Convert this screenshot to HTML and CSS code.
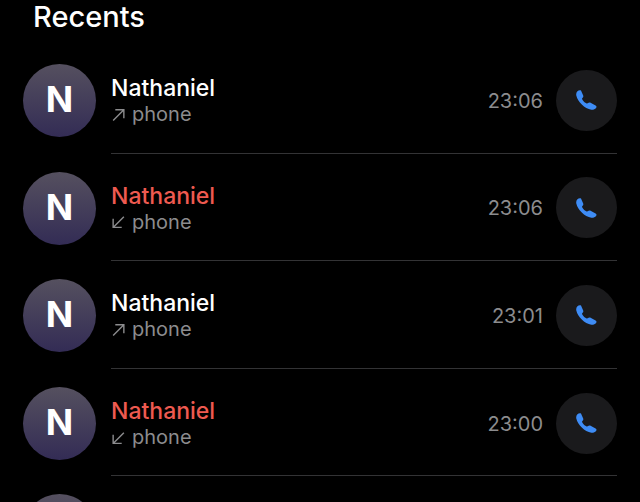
FILE: index.html
```html
<!DOCTYPE html>
<html lang="en">
<head>
  <meta charset="UTF-8">
  <meta name="viewport" content="width=device-width, initial-scale=1.0">
  <title>Recents</title>
  <link rel="stylesheet" href="styles.css">
</head>
<body>
  <h1 class="title">Recents</h1>

  <div class="call-list">
    <div class="call-row">
      <div class="avatar">N</div>
      <div class="call-main">
        <div class="call-info">
          <div class="call-name">Nathaniel</div>
          <div class="call-type">
            <svg class="arrow" viewBox="0 0 14 14"><path d="M2 12.5 12 2.5M4 2.5h8v8"/></svg>
            phone
          </div>
        </div>
        <div class="call-time">23:06</div>
        <div class="call-btn">
          <svg class="phone" viewBox="0 0 21 20"><path d="M1.2 1.600C2.400.400 4-.100 5 .600L7.200 5.500C7.600 6.600 7.200 7.400 6.400 8 6 8.400 6 8.900 6.300 9.400 7.300 11.200 8.900 12.600 10.700 13.400 11.200 13.600 11.600 13.500 12 13.100 12.800 12.400 13.600 12.200 14.600 12.700L19.600 15.400C20.600 16 20.800 17 20.200 17.800 19 19.300 17.200 20 15.400 19.800 8.500 18.500 1.800 12 .3 5.500 0 4 .3 2.600 1.200 1.600Z"/></svg>
        </div>
      </div>
    </div>

    <div class="call-row">
      <div class="avatar">N</div>
      <div class="call-main">
        <div class="call-info">
          <div class="call-name missed">Nathaniel</div>
          <div class="call-type">
            <svg class="arrow" viewBox="0 0 14 14"><path d="M12 2.500 2 12.500M2 4.500v8h8"/></svg>
            phone
          </div>
        </div>
        <div class="call-time">23:06</div>
        <div class="call-btn">
          <svg class="phone" viewBox="0 0 21 20"><path d="M1.2 1.600C2.400.400 4-.100 5 .600L7.200 5.500C7.600 6.600 7.200 7.400 6.400 8 6 8.400 6 8.900 6.300 9.400 7.300 11.200 8.900 12.600 10.700 13.400 11.200 13.600 11.600 13.500 12 13.100 12.800 12.400 13.600 12.200 14.600 12.700L19.600 15.400C20.600 16 20.800 17 20.200 17.800 19 19.300 17.200 20 15.400 19.800 8.500 18.500 1.800 12 .3 5.500 0 4 .3 2.600 1.200 1.600Z"/></svg>
        </div>
      </div>
    </div>

    <div class="call-row">
      <div class="avatar">N</div>
      <div class="call-main">
        <div class="call-info">
          <div class="call-name">Nathaniel</div>
          <div class="call-type">
            <svg class="arrow" viewBox="0 0 14 14"><path d="M2 12.5 12 2.5M4 2.5h8v8"/></svg>
            phone
          </div>
        </div>
        <div class="call-time">23:01</div>
        <div class="call-btn">
          <svg class="phone" viewBox="0 0 21 20"><path d="M1.2 1.600C2.400.400 4-.100 5 .600L7.200 5.500C7.600 6.600 7.200 7.400 6.400 8 6 8.400 6 8.900 6.300 9.400 7.300 11.200 8.900 12.600 10.700 13.400 11.200 13.600 11.600 13.500 12 13.100 12.800 12.400 13.600 12.200 14.600 12.700L19.600 15.400C20.600 16 20.800 17 20.200 17.800 19 19.300 17.200 20 15.400 19.800 8.500 18.500 1.800 12 .3 5.500 0 4 .3 2.600 1.200 1.600Z"/></svg>
        </div>
      </div>
    </div>

    <div class="call-row">
      <div class="avatar">N</div>
      <div class="call-main">
        <div class="call-info">
          <div class="call-name missed">Nathaniel</div>
          <div class="call-type">
            <svg class="arrow" viewBox="0 0 14 14"><path d="M12 2.500 2 12.500M2 4.500v8h8"/></svg>
            phone
          </div>
        </div>
        <div class="call-time">23:00</div>
        <div class="call-btn">
          <svg class="phone" viewBox="0 0 21 20"><path d="M1.2 1.600C2.400.400 4-.100 5 .600L7.200 5.500C7.600 6.600 7.200 7.400 6.400 8 6 8.400 6 8.900 6.300 9.400 7.300 11.200 8.900 12.600 10.700 13.400 11.200 13.600 11.600 13.500 12 13.100 12.800 12.400 13.600 12.200 14.600 12.700L19.600 15.400C20.600 16 20.800 17 20.200 17.800 19 19.300 17.200 20 15.400 19.800 8.500 18.500 1.800 12 .3 5.500 0 4 .3 2.600 1.200 1.600Z"/></svg>
        </div>
      </div>
    </div>

    <div class="call-row">
      <div class="avatar"></div>
    </div>
  </div>
</body>
</html>
```

FILE: styles.css
```css
html, body {
  height: 100%;
  overflow: hidden;
}
body {
  margin: 0;
  background-color: #000;
  color: #fff;
  font-family: Inter, "Liberation Sans", sans-serif;
}
.title {
  margin: 0;
  padding: 0 0 0 33px;
  height: 46px;
  font-size: 29px;
  font-weight: 500;
  line-height: 34px;
}
.call-row {
  display: flex;
  align-items: flex-start;
  gap: 15px;
  height: 107.6px;
  padding: 0 23px;
}
.avatar {
  flex: none;
  width: 73px;
  height: 73px;
  margin-top: 18px;
  border-radius: 50%;
  background: linear-gradient(#55505f, #332c55);
  font-size: 36px;
  font-weight: 700;
  line-height: 71px;
  text-align: center;
}
.call-main {
  flex: 1;
  display: flex;
  align-items: center;
  box-sizing: border-box;
  height: 107.6px;
  padding-top: 2px;
  border-bottom: 1px solid #333335;
}
.call-info {
  flex: 1;
  padding-top: 2px;
}
.call-name {
  font-size: 23px;
  font-weight: 500;
  line-height: 27px;
}
.call-name.missed {
  color: #ee5a50;
}
.call-type {
  display: flex;
  align-items: center;
  gap: 6px;
  margin-top: -1px;
  color: #8c8c8e;
  font-size: 20px;
  line-height: 26px;
}
.arrow {
  width: 15px;
  height: 15px;
  fill: none;
  stroke: #8c8c8e;
  stroke-width: 1.3;
}
.call-time {
  margin-top: 1px;
  margin-right: 13px;
  color: #8c8c8e;
  font-size: 20px;
}
.call-btn {
  flex: none;
  display: flex;
  align-items: center;
  justify-content: center;
  width: 61px;
  height: 61px;
  border-radius: 50%;
  background-color: #1a1a1c;
}
.phone {
  width: 21px;
  height: 20px;
  fill: #3e8cf5;
}
```
